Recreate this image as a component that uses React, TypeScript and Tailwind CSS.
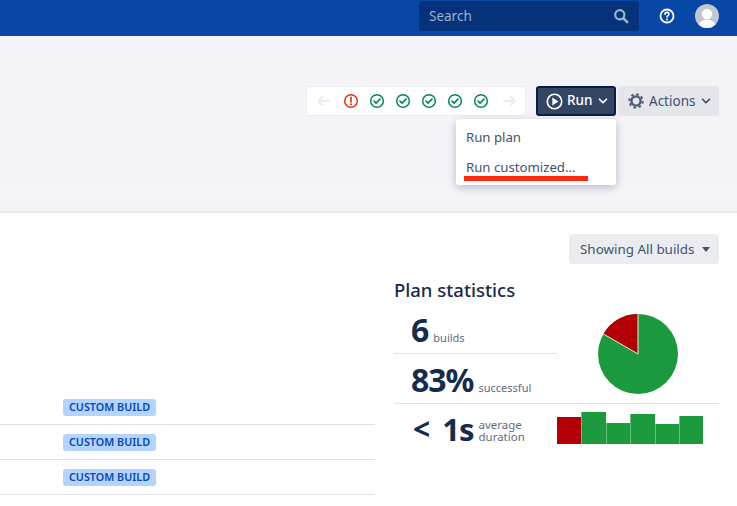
import { ChevronDown } from 'lucide-react';

const bars = [
  { height: 'h-[27px]', color: 'bg-[#b30006]' },
  { height: 'h-[32px]', color: 'bg-[#1a9a3c]' },
  { height: 'h-[21px]', color: 'bg-[#1a9a3c]' },
  { height: 'h-[30px]', color: 'bg-[#1a9a3c]' },
  { height: 'h-[20px]', color: 'bg-[#1a9a3c]' },
  { height: 'h-[28px]', color: 'bg-[#1a9a3c]' },
];

function CheckIcon() {
  return (
    <svg width="16" height="16" viewBox="0 0 16 16" fill="none">
      <circle cx="8" cy="8" r="6.3" stroke="#00875a" strokeWidth="1.5" />
      <path d="M5 8.2l2.1 2L11 6" stroke="#00875a" strokeWidth="1.7" strokeLinecap="round" strokeLinejoin="round" />
    </svg>
  );
}

function FailIcon() {
  return (
    <svg width="16" height="16" viewBox="0 0 16 16" fill="none">
      <circle cx="8" cy="8" r="6.3" stroke="#de350b" strokeWidth="1.5" />
      <path d="M8 4.4v4.4" stroke="#de350b" strokeWidth="1.7" strokeLinecap="round" />
      <circle cx="8" cy="11.2" r="1" fill="#de350b" />
    </svg>
  );
}

function ArrowIcon({ right = false }: { right?: boolean }) {
  return (
    <svg width="14" height="12" viewBox="0 0 14 12" fill="none">
      <path
        d={right ? 'M1 6h11M8 2l4 4-4 4' : 'M13 6H2M6 2L2 6l4 4'}
        stroke="#ebecf0"
        strokeWidth="2"
        strokeLinecap="round"
        strokeLinejoin="round"
      />
    </svg>
  );
}

function GearIcon() {
  return (
    <svg width="16" height="16" viewBox="0 0 16 16" fill="none">
      <circle cx="8" cy="8" r="4.6" stroke="#4a5a74" strokeWidth="2.4" />
      <circle cx="8" cy="8" r="6.7" stroke="#4a5a74" strokeWidth="2" strokeDasharray="2.6 2.66" />
    </svg>
  );
}

function Row() {
  return (
    <div className="h-[35px] flex items-center pl-[63px] border-b border-[#dfe1e6]">
      <span className="h-[17px] w-[93px] pt-px flex items-center justify-center rounded-[3px] bg-[#b3d4ff] text-[#0747b6] text-[10.8px] font-semibold">
        CUSTOM BUILD
      </span>
    </div>
  );
}

export default function App() {
  return (
    <div className="w-[737px] h-[506px] overflow-hidden bg-white font-['Noto_Sans',sans-serif] text-[#42526e]">
      {/* Top nav */}
      <div className="h-9 bg-[#0747a6] flex items-center justify-end pb-[4px]">
        <div className="w-[220px] h-[30px] bg-[#05327a] rounded-[3px] flex items-center justify-between pl-[10px] pr-[10px]">
          <span className="text-[13.5px] text-[#9fb3d1]">Search</span>
          <svg width="16" height="16" viewBox="0 0 16 16" fill="none">
            <circle cx="6.8" cy="6.8" r="4.6" stroke="#9fb3d1" strokeWidth="2.2" />
            <path d="M10.4 10.4l3.8 3.8" stroke="#9fb3d1" strokeWidth="2.6" strokeLinecap="round" />
          </svg>
        </div>
        <div className="ml-[20px] w-[16px] flex justify-center">
          <svg width="16" height="16" viewBox="0 0 16 16" fill="none">
            <circle cx="8" cy="8" r="6.5" stroke="white" strokeWidth="1.8" />
            <path d="M6 6.3c0-1.2.9-1.9 2-1.9s2 .7 2 1.7c0 1.5-2 1.5-2 3" stroke="white" strokeWidth="1.6" strokeLinecap="round" />
            <circle cx="8" cy="11.4" r="1" fill="white" />
          </svg>
        </div>
        <div className="ml-[20px] mr-[18px] w-6 h-6 rounded-full bg-[#c1c7d0] overflow-hidden">
          <svg width="24" height="24" viewBox="0 0 24 24">
            <circle cx="12" cy="10" r="5.2" fill="white" />
            <ellipse cx="12" cy="22" rx="8.5" ry="6.5" fill="white" />
          </svg>
        </div>
      </div>

      {/* Plan header */}
      <div className="relative h-[177px] bg-[linear-gradient(#f3f3f8_0,#f3f3f8_143px,#f5f5f9_152px,#f3f3f8_172px)] border-b-2 border-[#e8e9ed]">
        <div className="flex justify-end items-start pt-[50px] pr-[18px]">
          <div className="h-[30px] w-[220px] bg-white border border-[#ebecf0] rounded-[3px] flex items-center pl-[9px]">
            <ArrowIcon />
            <div className="ml-[13px] flex gap-[10px]">
              <FailIcon />
              <CheckIcon />
              <CheckIcon />
              <CheckIcon />
              <CheckIcon />
              <CheckIcon />
            </div>
            <div className="ml-[14px] flex">
              <ArrowIcon right />
            </div>
          </div>
          <div className="ml-[10px] h-[30px] w-[80px] bg-[#344563] border-2 border-[#091e42] rounded-[3px] flex items-center pl-[8px] text-white">
            <svg width="17" height="17" viewBox="0 0 17 17" fill="none">
              <circle cx="8.5" cy="8.5" r="7.2" stroke="white" strokeWidth="1.6" />
              <path d="M6.3 4.6v7.8L12.4 8.5z" fill="white" />
            </svg>
            <span className="ml-[4px] mb-px text-[13.5px] font-medium">Run</span>
            <ChevronDown size={14} strokeWidth={3} className="ml-[4px]" />
          </div>
          <div className="ml-[2px] h-[30px] w-[101px] bg-[#e4e6ea] rounded-[3px] flex items-center pl-[10px]">
            <GearIcon />
            <span className="ml-[5px] text-[13.5px]">Actions</span>
            <ChevronDown size={14} strokeWidth={3} className="ml-[4px]" />
          </div>
        </div>

        {/* Run dropdown */}
        <div className="absolute left-[456px] top-[83px] w-[160px] h-[66px] bg-white rounded-[3px] shadow-[0_3px_8px_rgba(9,30,66,0.25)] pl-[10px] pt-[4px] text-[13.2px]">
          <div className="h-[30px] flex items-center">Run plan</div>
          <div className="h-[30px] flex items-center">Run customized...</div>
          <div className="absolute left-[8px] top-[57px] w-[124px] h-[5px] bg-[#ff2a12]" />
        </div>
      </div>

      {/* Body */}
      <div className="flex">
        <div className="w-[375px] pt-[177px] shrink-0">
          <Row />
          <Row />
          <Row />
        </div>
        <div className="flex-1 pl-[19px] pr-[18px]">
          <div className="flex justify-end pt-[21px]">
            <div className="h-[30px] w-[150px] bg-[#ebecf0] rounded-[3px] flex items-center justify-between pl-[11px] pr-[9px] text-[13.4px]">
              <span>Showing All builds</span>
              <svg width="8" height="5" viewBox="0 0 8 5"><path d="M0 0h8L4 5z" fill="#42526e" /></svg>
            </div>
          </div>

          <h2 className="mt-[12px] h-[28px] leading-[28px] text-[18.5px] font-medium text-[#172b4d]">Plan statistics</h2>

          <div className="relative h-[138px] mt-[3px]">
            <div className="w-[163px]">
              <div className="h-[47px] border-b border-[#dfe1e6] pl-[17px] flex items-baseline">
                <span className="text-[32px] leading-[45px] font-bold text-[#172b4d]">6</span>
                <span className="ml-[4px] text-[11px] text-[#5e6c84]">builds</span>
              </div>
              <div className="h-[49px] pl-[17px] flex items-baseline">
                <span className="text-[32px] leading-[51px] font-bold tracking-[-1px] text-[#172b4d]">83%</span>
                <span className="ml-[5px] text-[11px] text-[#5e6c84]">successful</span>
              </div>
            </div>
            <div className="border-t border-[#dfe1e6] flex h-[42px]">
              <div className="w-[163px] pl-[19px] flex items-center pt-[8px]">
                <span className="text-[30px] leading-[40px] font-bold text-[#172b4d]">{'<'}</span>
                <span className="ml-[12px] text-[31px] leading-[40px] font-bold tracking-[-1px] text-[#172b4d]">1s</span>
                <span className="ml-[5px] mt-[4px] text-[11.5px] leading-[12px] text-[#5e6c84]">
                  average
                  <br />
                  duration
                </span>
              </div>
              <div className="flex items-end h-[32px] mt-[8px]">
                {bars.map((bar, i) => (
                  <div key={i} className={`w-[24.4px] ${bar.height} ${bar.color} ${i > 0 ? 'border-l border-[#6dbb80]' : ''}`} />
                ))}
              </div>
            </div>

            {/* pie chart */}
            <svg className="absolute left-[203px] top-[6px]" width="82" height="82" viewBox="0 0 82 82">
              <circle cx="41" cy="41" r="40" fill="#1a9a3c" />
              <path d="M41 41L41 1A40 40 0 0 0 6.4 21z" fill="#b30006" />
              <path d="M41 1V41L6.4 21" fill="none" stroke="#ece8e0" strokeWidth="1" />
            </svg>
          </div>
        </div>
      </div>
    </div>
  );
}
